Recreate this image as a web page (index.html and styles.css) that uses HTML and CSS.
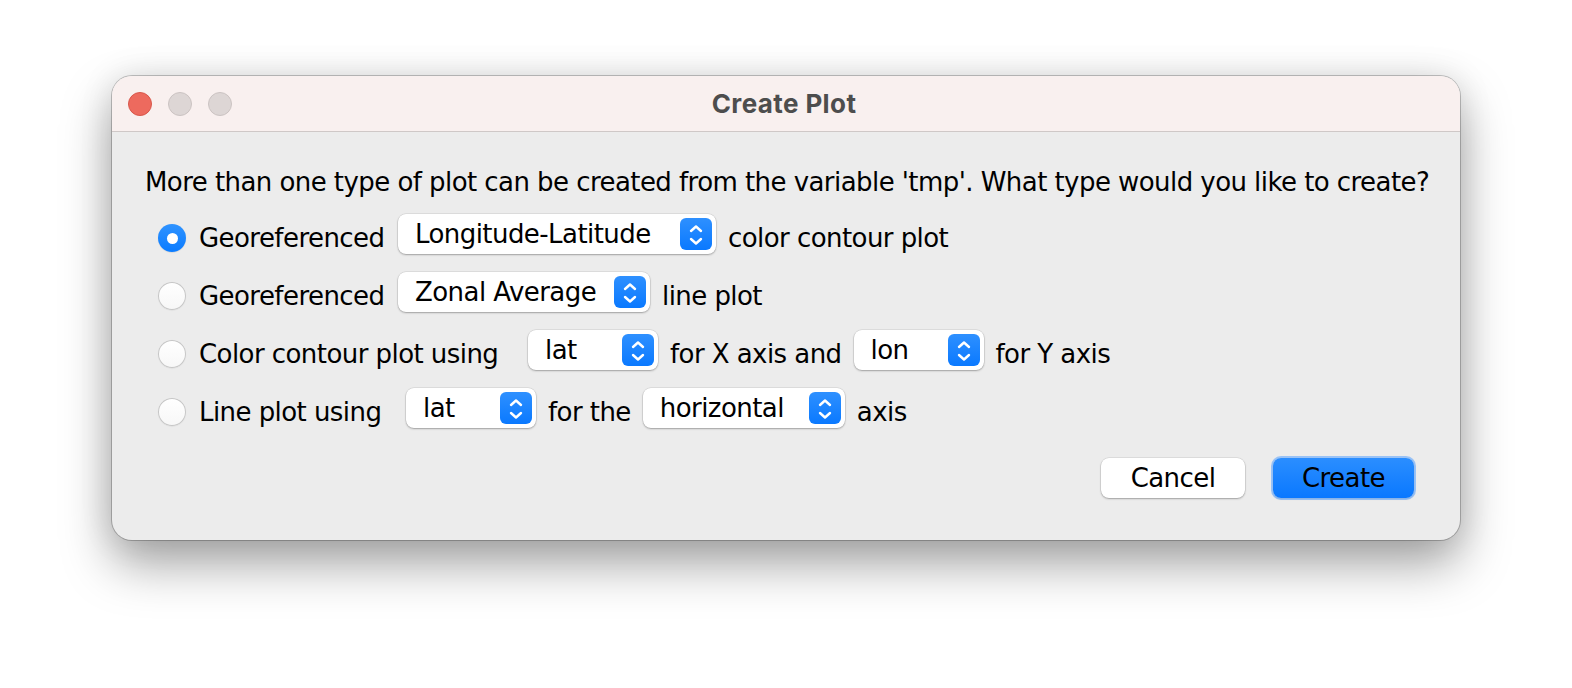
FILE: index.html
```html
<!DOCTYPE html>
<html lang="en">
<head>
<meta charset="utf-8">
<title>Create Plot</title>
<link rel="stylesheet" href="styles.css">
</head>
<body>
<div class="stage">
  <div class="window">
    <div class="titlebar">
      <div class="lights">
        <span class="light light-close"></span>
        <span class="light light-off"></span>
        <span class="light light-off"></span>
      </div>
      <div class="title">Create Plot</div>
    </div>
    <div class="content">
      <p class="prompt">More than one type of plot can be created from the variable 'tmp'. What type would you like to create?</p>
      <div class="options">
        <div class="row">
          <label class="radio-item ri-geo"><span class="radio radio-on"></span><span class="label">Georeferenced</span></label>
          <div class="popup w-longlat"><span class="popup-text">Longitude-Latitude</span><span class="stepper"><svg viewBox="0 0 32 32" width="32" height="32"><path d="M11 13 L16 8.5 L21 13 M11 21 L16 25.5 L21 21"/></svg></span></div>
          <span class="label">color contour plot</span>
        </div>
        <div class="row">
          <label class="radio-item ri-geo"><span class="radio"></span><span class="label">Georeferenced</span></label>
          <div class="popup w-zonal"><span class="popup-text">Zonal Average</span><span class="stepper"><svg viewBox="0 0 32 32" width="32" height="32"><path d="M11 13 L16 8.5 L21 13 M11 21 L16 25.5 L21 21"/></svg></span></div>
          <span class="label">line plot</span>
        </div>
        <div class="row">
          <label class="radio-item ri-contour"><span class="radio"></span><span class="label">Color contour plot using</span></label>
          <div class="popup w-small"><span class="popup-text">lat</span><span class="stepper"><svg viewBox="0 0 32 32" width="32" height="32"><path d="M11 13 L16 8.5 L21 13 M11 21 L16 25.5 L21 21"/></svg></span></div>
          <span class="label">for X axis and</span>
          <div class="popup w-small"><span class="popup-text">lon</span><span class="stepper"><svg viewBox="0 0 32 32" width="32" height="32"><path d="M11 13 L16 8.5 L21 13 M11 21 L16 25.5 L21 21"/></svg></span></div>
          <span class="label">for Y axis</span>
        </div>
        <div class="row">
          <label class="radio-item ri-line"><span class="radio"></span><span class="label">Line plot using</span></label>
          <div class="popup w-small"><span class="popup-text">lat</span><span class="stepper"><svg viewBox="0 0 32 32" width="32" height="32"><path d="M11 13 L16 8.5 L21 13 M11 21 L16 25.5 L21 21"/></svg></span></div>
          <span class="label">for the</span>
          <div class="popup w-horiz"><span class="popup-text">horizontal</span><span class="stepper"><svg viewBox="0 0 32 32" width="32" height="32"><path d="M11 13 L16 8.5 L21 13 M11 21 L16 25.5 L21 21"/></svg></span></div>
          <span class="label">axis</span>
        </div>
      </div>
      <div class="buttons">
        <button class="btn btn-cancel">Cancel</button>
        <button class="btn btn-default">Create</button>
      </div>
    </div>
  </div>
</div>
</body>
</html>
```
FILE: styles.css
```css
* { box-sizing: border-box; }
html, body { margin: 0; padding: 0; background: #ffffff; }
body { width: 1572px; height: 688px; overflow: hidden; }

.stage {
  padding: 76px 0 0 112px;
}

.window {
  width: 1348px;
  height: 464px;
  border-radius: 20px;
  overflow: hidden;
  background: #ececec;
  box-shadow:
    0 0 0 1px rgba(0, 0, 0, 0.22),
    0 24px 50px rgba(0, 0, 0, 0.36),
    0 0 34px rgba(0, 0, 0, 0.10);
  font-family: "DejaVu Sans", "Liberation Sans", sans-serif;
  color: #000;
}

.titlebar {
  height: 56px;
  background: #f9f0ef;
  border-bottom: 1px solid #cfc8c7;
  display: grid;
  grid-template-columns: 1fr auto 1fr;
  align-items: center;
  padding: 0 16px;
}
.lights { display: flex; gap: 16px; }
.light {
  width: 24px; height: 24px; border-radius: 50%;
  box-sizing: border-box;
}
.light-close { background: #ed6a5e; border: 1px solid #d8574b; }
.light-off { background: #ddd6d5; border: 1px solid #cbc3c2; }
.title {
  font-family: Inter, "Liberation Sans", sans-serif;
  font-weight: 700;
  font-size: 26px;
  color: #4d4d4d;
  letter-spacing: 0.4px;
  margin-left: -4px;
}

.content {
  padding: 35px 45px 42px 33px;
  font-size: 26px;
  letter-spacing: -0.56px;
}
.prompt {
  margin: 0;
  line-height: 30px;
  white-space: nowrap;
}

.options {
  margin-top: 17px;
  padding-left: 13px;
  display: flex;
  flex-direction: column;
  gap: 10px;
}
.row {
  display: flex;
  align-items: center;
  gap: 12px;
  height: 48px;
}
.label { white-space: nowrap; line-height: 30px; }

.radio-item {
  display: flex;
  align-items: center;
  gap: 13px;
  flex: none;
}
.ri-geo { width: 228px; }
.ri-contour { width: 358px; }
.ri-line { width: 236px; }

.radio {
  width: 28px; height: 28px; border-radius: 50%;
  background: linear-gradient(#ffffff, #f7f7f7);
  box-shadow: inset 0 0 0 1px #c6c6c6, 0 0.5px 1px rgba(0,0,0,0.08);
  flex: none;
  display: flex; align-items: center; justify-content: center;
}
.radio-on {
  background: linear-gradient(#2f93ff, #0a7bff);
  box-shadow: 0 0.5px 1px rgba(0,0,0,0.15);
}
.radio-on::after {
  content: "";
  width: 11px; height: 11px; border-radius: 50%;
  background: #fff;
}

.popup {
  height: 40px;
  margin-bottom: 8px;
  background: #fff;
  border-radius: 8px;
  box-shadow: 0 0 0 0.5px rgba(0,0,0,0.12), 0 1px 2px rgba(0,0,0,0.28);
  display: flex;
  align-items: center;
  justify-content: space-between;
  padding: 0 4px 0 17px;
  flex: none;
}
.popup-text { white-space: nowrap; line-height: 30px; }
.w-longlat { width: 318px; }
.w-zonal { width: 252px; }
.w-small { width: 130px; }
.w-horiz { width: 202px; }

.stepper {
  width: 32px; height: 32px;
  border-radius: 6px;
  background: linear-gradient(#2e90ff, #0a79ff);
  display: flex; align-items: center; justify-content: center;
  flex: none;
}
.stepper svg path {
  fill: none;
  stroke: #fff;
  stroke-width: 2.4;
  stroke-linecap: round;
  stroke-linejoin: round;
}

.buttons {
  margin-top: 22px;
  display: flex;
  justify-content: flex-end;
  gap: 28px;
  padding-right: 1px;
}
.btn {
  font-family: "DejaVu Sans", "Liberation Sans", sans-serif;
  font-size: 26px;
  letter-spacing: -0.56px;
  height: 40px;
  border: none;
  border-radius: 8px;
  color: #000;
  padding: 0;
  line-height: 30px;
}
.btn-cancel {
  width: 144px;
  background: #fff;
  box-shadow: 0 0 0 0.5px rgba(0,0,0,0.12), 0 1px 2px rgba(0,0,0,0.28);
}
.btn-default {
  width: 141px;
  background: linear-gradient(#2b8eff, #0a78ff);
  box-shadow: 0 0 0 2px rgba(86, 160, 255, 0.55), 0 1px 2px rgba(0,0,0,0.2);
}
```
